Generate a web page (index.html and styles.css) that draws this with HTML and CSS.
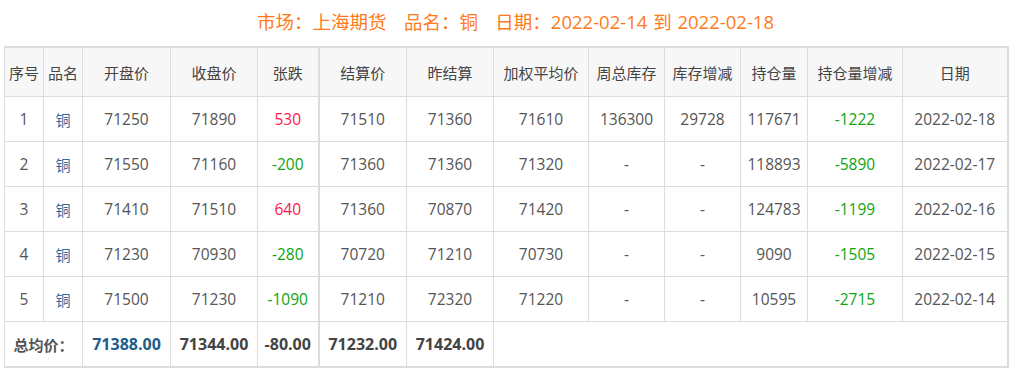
FILE: index.html
```html
<!DOCTYPE html>
<html lang="zh-CN">
<head>
<meta charset="utf-8">
<title>上海期货 铜</title>
<link rel="stylesheet" href="styles.css">
</head>
<body>
<div class="wrap">
  <div class="title">市场：上海期货&nbsp;&nbsp;&nbsp;品名：铜&nbsp;&nbsp;&nbsp;日期：2022-02-14 到 2022-02-18</div>
  <table class="grid">
    <colgroup>
      <col class="c1"><col class="c2"><col class="c3"><col class="c4"><col class="c5"><col class="c6"><col class="c7"><col class="c8"><col class="c9"><col class="c10"><col class="c11"><col class="c12"><col class="c13">
    </colgroup>
    <thead>
      <tr>
        <th>序号</th><th>品名</th><th>开盘价</th><th>收盘价</th><th class="sep">张跌</th><th>结算价</th><th>昨结算</th><th>加权平均价</th><th>周总库存</th><th>库存增减</th><th>持仓量</th><th>持仓量增减</th><th>日期</th>
      </tr>
    </thead>
    <tbody>
      <tr><td>1</td><td class="name">铜</td><td>71250</td><td>71890</td><td class="sep up">530</td><td>71510</td><td>71360</td><td>71610</td><td>136300</td><td>29728</td><td>117671</td><td class="down">-1222</td><td>2022-02-18</td></tr>
      <tr><td>2</td><td class="name">铜</td><td>71550</td><td>71160</td><td class="sep down">-200</td><td>71360</td><td>71360</td><td>71320</td><td>-</td><td>-</td><td>118893</td><td class="down">-5890</td><td>2022-02-17</td></tr>
      <tr><td>3</td><td class="name">铜</td><td>71410</td><td>71510</td><td class="sep up">640</td><td>71360</td><td>70870</td><td>71420</td><td>-</td><td>-</td><td>124783</td><td class="down">-1199</td><td>2022-02-16</td></tr>
      <tr><td>4</td><td class="name">铜</td><td>71230</td><td>70930</td><td class="sep down">-280</td><td>70720</td><td>71210</td><td>70730</td><td>-</td><td>-</td><td>9090</td><td class="down">-1505</td><td>2022-02-15</td></tr>
      <tr><td>5</td><td class="name">铜</td><td>71500</td><td>71230</td><td class="sep down">-1090</td><td>71210</td><td>72320</td><td>71220</td><td>-</td><td>-</td><td>10595</td><td class="down">-2715</td><td>2022-02-14</td></tr>
    </tbody>
    <tfoot>
      <tr><td colspan="2" class="label">总均价：</td><td class="avg blue">71388.00</td><td class="avg">71344.00</td><td class="avg sep">-80.00</td><td class="avg">71232.00</td><td class="avg">71424.00</td><td colspan="6"></td></tr>
    </tfoot>
  </table>
</div>
</body>
</html>
```
FILE: styles.css
```css
html, body {
  margin: 0;
  padding: 0;
  background: #fff;
}
.wrap {
  padding-left: 4px;
  width: 1003px;
  font-family: "Open Sans", "Noto Sans CJK SC", sans-serif;
}
.title {
  height: 46px;
  line-height: 44px;
  text-align: center;
  padding-left: 20px;
  font-size: 18.5px;
  color: #ff7a1a;
  font-family: "Open Sans", "Noto Sans CJK SC", sans-serif;
  word-spacing: 1px;
}
.grid {
  width: 1003px;
  table-layout: fixed;
  border-collapse: collapse;
  border-top: 2px solid #ddd;
  border-right: 2px solid #ddd;
  border-bottom: 2px solid #ddd;
  border-left: 1px solid #ddd;
  font-size: 15.5px;
  color: #555;
}
.c1, .c2 { width: 39px; }
.c3 { width: 88px; }
.c4 { width: 87px; }
.c5 { width: 61px; }
.c6 { width: 88px; }
.c7 { width: 87px; }
.c8 { width: 95px; }
.c9 { width: 76px; }
.c10 { width: 76px; }
.c11 { width: 67px; }
.c12 { width: 95px; }
.c13 { width: 105px; }
.grid th, .grid td {
  border: 1px solid #ddd;
  text-align: center;
  padding: 0;
  white-space: nowrap;
}
.grid th {
  height: 48px;
  background: #f7f7f7;
  font-weight: normal;
  font-size: 15px;
  color: #444;
  font-family: "Noto Sans CJK SC", sans-serif;
}
.grid tbody td {
  height: 44px;
}
.grid tfoot td {
  height: 44px;
}
.grid .sep {
  border-right: 2px solid #ddd;
}
.name {
  color: #2a6b9e;
  font-size: 15px;
  font-family: "Noto Sans CJK SC", sans-serif;
}
.up { color: #f5194b; }
.down { color: #0ea50e; }
.label {
  font-weight: bold;
  font-size: 15px;
  color: #555;
  font-family: "Noto Sans CJK SC", sans-serif;
}
.avg {
  font-weight: bold;
  font-size: 16px;
  color: #444;
}
.avg.blue { color: #1c5d8e; }
```
